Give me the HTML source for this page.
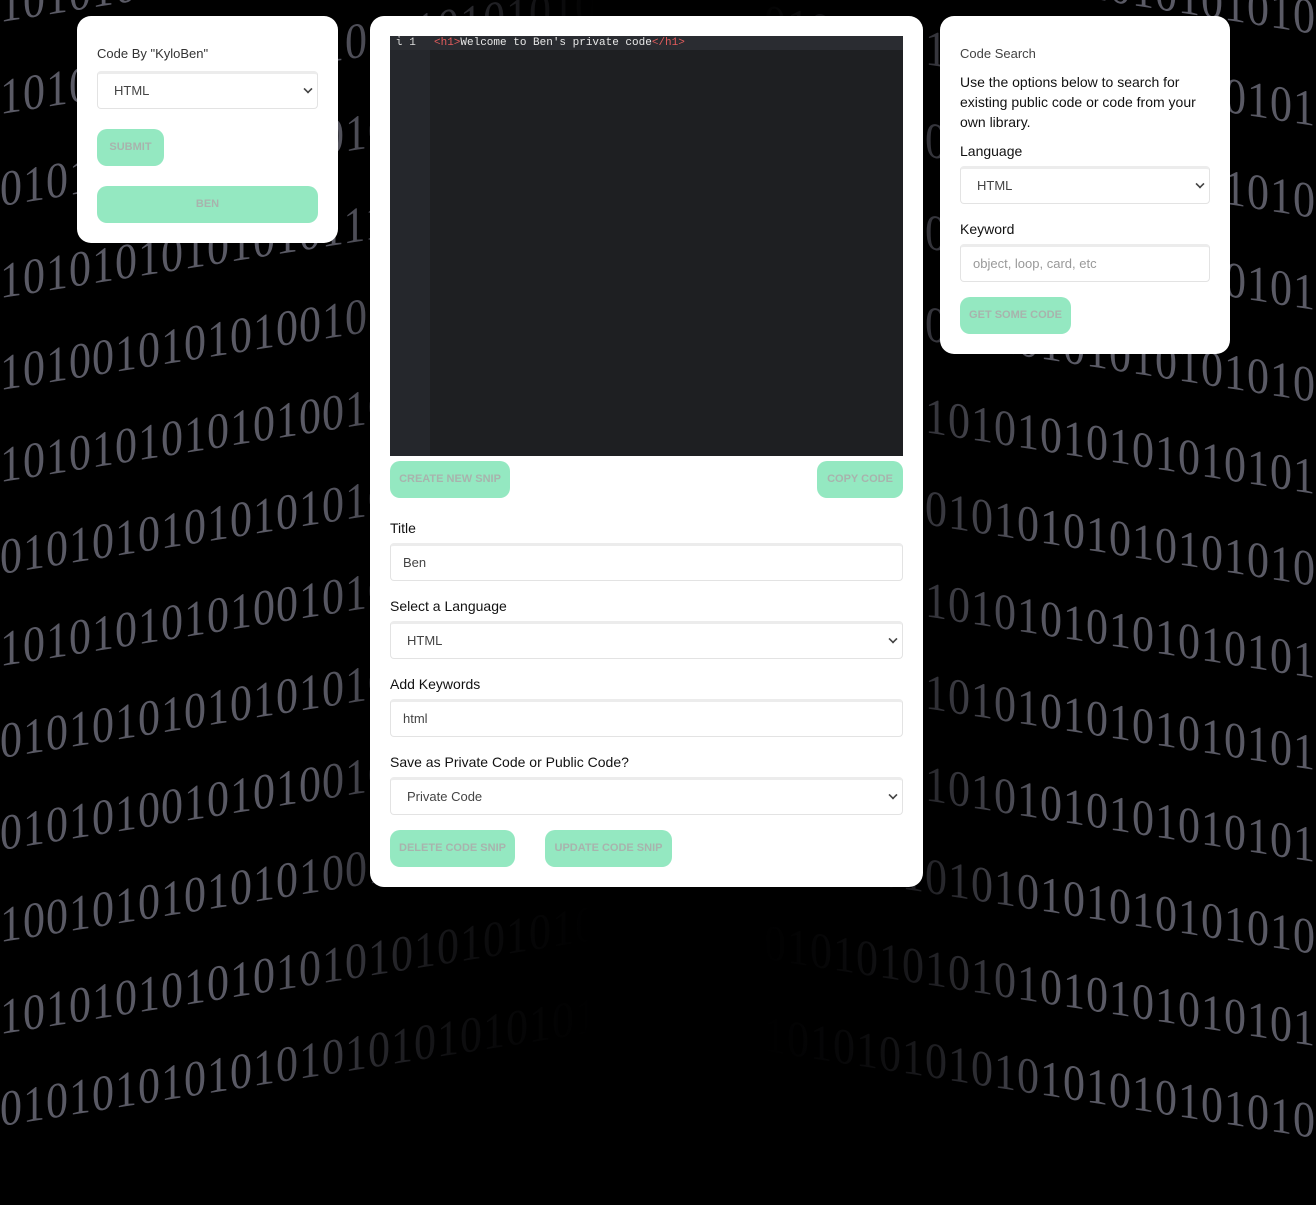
<!DOCTYPE html>
<html style="overflow:hidden"><head><meta charset="utf-8"><style>
*{box-sizing:border-box;margin:0;padding:0}
html,body{width:1316px;height:1205px;overflow:hidden;background:#000}
body{font-family:"Liberation Sans",sans-serif}
#wrap{position:relative;width:1316px;height:1205px;overflow:hidden;background:#000}
.bin{position:absolute;color:rgba(200,200,225,.45);font:44px "Liberation Serif",serif;line-height:80px;white-space:nowrap;overflow:hidden;letter-spacing:1px}
.bin.l{left:0;top:-40px;width:700px;height:1050px;transform-origin:0 0;transform:skewY(-9deg) scaleY(1.15);-webkit-mask-image:linear-gradient(90deg,#000 0%,#000 45%,transparent 85%);mask-image:linear-gradient(90deg,#000 0%,#000 45%,transparent 85%)}
.bin.r{left:660px;top:-120px;width:656px;height:1100px;transform-origin:100% 0;transform:skewY(9deg) scaleY(1.15);-webkit-mask-image:linear-gradient(270deg,#000 0%,#000 40%,transparent 85%);mask-image:linear-gradient(270deg,#000 0%,#000 40%,transparent 85%);text-align:right;direction:rtl}
.shade{position:absolute;left:0;top:0;width:1316px;height:1205px;background:radial-gradient(ellipse 420px 800px at 50% 100%,#000 0%,rgba(0,0,0,.7) 50%,rgba(0,0,0,0) 100%)}
.card{position:absolute;background:#fff;border-radius:14px}
.lbl{font-size:14px;color:#111;position:absolute}
.in{position:absolute;height:38px;border:1px solid #e3e3e3;border-top:3px solid #ececec;border-radius:4px;font-size:13px;color:#444;padding:0 0 0 16px;line-height:34px;background:#fff}
.in .ch{position:absolute;right:5px;top:11px;width:8px;height:8px;border-right:2px solid #444;border-bottom:2px solid #444;transform:rotate(45deg) scale(.8)}
.btn{position:absolute;height:37px;background:#94e8c1;border-radius:10px;color:#a8b3ad;font-weight:bold;font-size:11px;text-align:center;line-height:37px}
</style></head><body><div id="wrap">
<div class="bin l">1010101010101010101010101010101010<br>1010101010101010101010101010101010<br>0101010101010101010101010101010101<br>1010101010101011101010101010101010<br>1010010101010010101010101010101010<br>1010101010101001010101010101010101<br>0101010101010101010101010101010101<br>1010101010100101010101010101010101<br>0101010101010101010101010101010101<br>0101010010101001010101010101010101<br>1001010101010100101010101010101010<br>1010101010101010101010101010101010<br>0101010101010101010101010101010101<br>1010101010101010101010101010101010</div>
<div class="bin r">0101010101010101010101010101010101<br>1010101010101010101010101010101010<br>0101010101010101010101010101010101<br>1010101010101010101010101010101010<br>0101010010101010100101010101010101<br>1010101010101010101010101010101010<br>0101010101010101010101010101010101<br>1010101010101010101010101010101010<br>0101010101010101010101010101010101<br>1010101010010101010101010101010101<br>0101010101010101010101010101010101<br>1010101010101010101010101010101010<br>0101010101010101010101010101010101<br>1010101010101010101010101010101010</div>
<div class="shade"></div>

<div class="card" style="left:77px;top:16px;width:261px;height:227px">
<div class="lbl" style="left:20px;top:30px;font-size:13px;color:#333">Code By "KyloBen"</div>
<div class="in" style="left:20px;top:55px;width:221px">HTML<span class="ch"></span></div>
<div class="btn" style="left:20px;top:113px;width:67px">SUBMIT</div>
<div class="btn" style="left:20px;top:170px;width:221px">BEN</div>
</div>

<div class="card" style="left:370px;top:16px;width:553px;height:871px">
<div style="position:absolute;left:20px;top:20px;width:513px;height:420px;background:#1e1f22">
<div style="position:absolute;left:0;top:0;width:40px;height:420px;background:#25272c"></div>
<div style="position:absolute;left:0;top:0;width:513px;height:14px;background:#2a2c31"></div>
<div style="position:absolute;left:6px;top:1px;font:11px 'Liberation Mono',monospace;color:#ddd">ἰ 1</div>
<div style="position:absolute;left:44px;top:1px;font:11px 'Liberation Mono',monospace;color:#e8e8e8;white-space:pre"><span style="color:#e25c5c">&lt;h1&gt;</span>Welcome to Ben's private code<span style="color:#e25c5c">&lt;/h1&gt;</span></div>
</div>
<div class="btn" style="left:20px;top:445px;width:120px">CREATE NEW SNIP</div>
<div class="btn" style="left:447px;top:445px;width:86px">COPY CODE</div>
<div class="lbl" style="left:20px;top:504px">Title</div>
<div class="in" style="left:20px;top:527px;width:513px;padding-left:12px">Ben</div>
<div class="lbl" style="left:20px;top:582px">Select a Language</div>
<div class="in" style="left:20px;top:605px;width:513px">HTML<span class="ch"></span></div>
<div class="lbl" style="left:20px;top:660px">Add Keywords</div>
<div class="in" style="left:20px;top:683px;width:513px;padding-left:12px">html</div>
<div class="lbl" style="left:20px;top:738px">Save as Private Code or Public Code?</div>
<div class="in" style="left:20px;top:761px;width:513px">Private Code<span class="ch"></span></div>
<div class="btn" style="left:20px;top:814px;width:125px">DELETE CODE SNIP</div>
<div class="btn" style="left:175px;top:814px;width:127px">UPDATE CODE SNIP</div>
</div>

<div class="card" style="left:940px;top:16px;width:290px;height:338px">
<div class="lbl" style="left:20px;top:30px;font-size:13px;color:#444">Code Search</div>
<div class="lbl" style="left:20px;top:56px;width:255px;line-height:20px">Use the options below to search for existing public code or code from your own library.</div>
<div class="lbl" style="left:20px;top:127px">Language</div>
<div class="in" style="left:20px;top:150px;width:250px">HTML<span class="ch"></span></div>
<div class="lbl" style="left:20px;top:205px">Keyword</div>
<div class="in" style="left:20px;top:228px;width:250px;padding-left:12px;color:#999">object, loop, card, etc</div>
<div class="btn" style="left:20px;top:281px;width:111px">GET SOME CODE</div>
</div>
</div></body></html>
